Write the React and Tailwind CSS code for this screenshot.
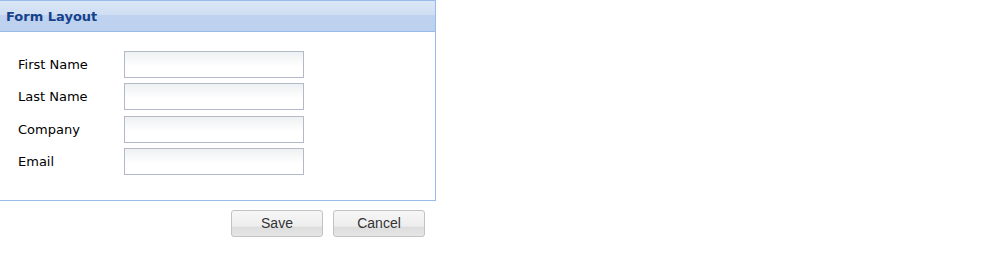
import React from "react";

const fields = [
  ["First Name", "mt-0"],
  ["Last Name", "mt-[5px]"],
  ["Company", "mt-[6px]"],
  ["Email", "mt-[5px]"],
];

export default function App() {
  return (
    <div className="w-[998px] h-[267px] bg-white" style={{ fontFamily: "Tahoma, 'DejaVu Sans', sans-serif" }}>
      <div className="w-[436px]">
        <div className="h-[201px] border border-l-0 border-[#99bbe8] flex flex-col">
          <div className="h-[31px] border-b border-[#99bbe8] bg-[linear-gradient(to_bottom,#dae7f6_0%,#d0def3_45%,#bfd3f0_48%,#bcd1ef_100%)] flex items-center pl-[6px]">
            <span className="text-[13px] font-bold text-[#15428b] leading-none">Form Layout</span>
          </div>
          <div className="flex flex-col pt-[19px] pl-[18px]">
            {fields.map(([f, m]) => (
              <div key={f} className={`flex items-center h-[27px] ${m}`}>
                <span className="w-[106px] text-[13px] text-black">{f}</span>
                <div className="w-[180px] h-[27px] border border-[#b5b8c8] bg-[linear-gradient(to_bottom,#eef1f2_0%,#ffffff_60%)]" />
              </div>
            ))}
          </div>
        </div>
        <div className="flex justify-end gap-[10px] pr-[11px] pt-[9px]">
          {["Save", "Cancel"].map((b) => (
            <div
              key={b}
              className="w-[92px] h-[27px] rounded-[3px] border border-[#c3c3c3] bg-[linear-gradient(to_bottom,#f6f6f6_0%,#eeeeee_60%,#dddddd_65%,#e6e6e6_100%)] flex items-center justify-center text-[14px] text-[#333]"
              style={{ fontFamily: "'Liberation Sans', Arial, sans-serif" }}
            >
              {b}
            </div>
          ))}
        </div>
      </div>
    </div>
  );
}
